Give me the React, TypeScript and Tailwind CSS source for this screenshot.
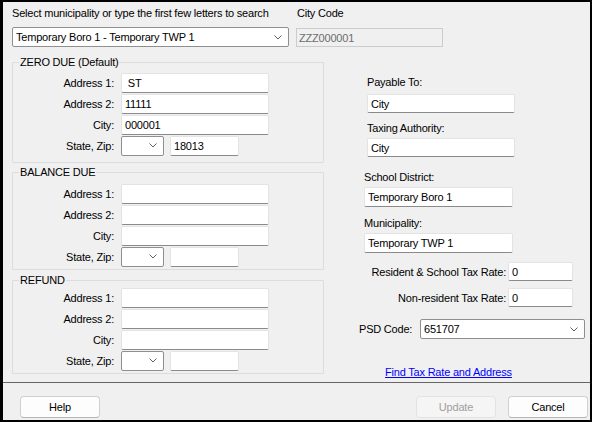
import type { ReactNode } from "react";

function Chevron() {
  return (
    <svg width="8" height="5" viewBox="0 0 8 5" className="shrink-0">
      <path d="M0.5 0.5 L4 4 L7.5 0.5" stroke="#606060" strokeWidth="1" fill="none" />
    </svg>
  );
}

function TextBox({
  value = "",
  className = "",
  short = false,
}: {
  value?: string;
  className?: string;
  short?: boolean;
}) {
  return (
    <input
      readOnly
      defaultValue={value}
      className={`box-border ${short ? "h-[19px]" : "h-[20px]"} rounded-[2px] border border-[#e3e3e3] border-b-[#8a8a8a] bg-white px-[3px] outline-none ${className}`}
    />
  );
}

function Combo({ value = "", className = "" }: { value?: string; className?: string }) {
  return (
    <div
      className={`box-border flex h-[20px] items-center justify-between rounded-[2px] border border-[#8f8f8f] bg-white pl-[3px] pr-[6px] ${className}`}
    >
      <span>{value}</span>
      <Chevron />
    </div>
  );
}

function AddressRow({ label, children }: { label: string; children: ReactNode }) {
  return (
    <div className="flex h-[21px] items-center">
      <span className="w-[101px] text-right">{label}</span>
      <div className="ml-[7px] flex items-center">{children}</div>
    </div>
  );
}

interface GroupProps {
  title: string;
  address1?: string;
  address2?: string;
  city?: string;
  zip?: string;
  className: string;
}

function AddressGroup({ title, address1, address2, city, zip, className }: GroupProps) {
  return (
    <fieldset className={`w-[312px] rounded-[1px] border border-[#dcdcdc] px-0 ${className}`}>
      <legend className="ml-[6px] px-[1px] leading-[14px]">{title}</legend>
      <AddressRow label="Address 1:">
        <TextBox value={address1} className="w-[148px]" />
      </AddressRow>
      <AddressRow label="Address 2:">
        <TextBox value={address2} className="w-[148px]" />
      </AddressRow>
      <AddressRow label="City:">
        <TextBox value={city} className="w-[148px]" />
      </AddressRow>
      <AddressRow label="State, Zip:">
        <Combo className="w-[43px]" />
        <TextBox value={zip} className="ml-[6px] w-[69px]" />
      </AddressRow>
    </fieldset>
  );
}

function Button({ label, disabled = false }: { label: string; disabled?: boolean }) {
  return (
    <button
      className={
        disabled
          ? "box-border h-[22px] w-[80px] rounded-[4px] border border-[#e2e2e2] bg-[#f5f5f5] text-[#a0a0a0]"
          : "box-border h-[22px] w-[80px] rounded-[4px] border border-[#d0d0d0] border-b-[#b5b5b5] bg-[#fdfdfd] text-black"
      }
    >
      {label}
    </button>
  );
}

export default function App() {
  return (
    <div className="box-border flex h-[422px] w-[592px] flex-col border-t-2 border-r-2 border-b-2 border-l-[3px] border-black bg-[#f0f0f0] font-['Liberation_Sans',Arial,sans-serif] text-[11px] leading-[14px] tracking-[-0.2px] text-black">
      <div className="flex flex-1 flex-col pl-[9px] pt-[4px]">
        <div className="flex gap-[7px]">
          <div className="flex w-[277px] flex-col gap-[7px]">
            <span>Select municipality or type the first few letters to search</span>
            <Combo value="Temporary Boro 1 - Temporary TWP 1" className="w-[277px]" />
          </div>
          <div className="flex w-[147px] flex-col">
            <span className="pl-[1px]">City Code</span>
            <div className="mt-[8px] box-border flex h-[19px] items-center border border-[#cccccc] bg-[#f0f0f0] pl-[2px] text-[#6d6d6d]">
              ZZZ000001
            </div>
          </div>
        </div>

        <div className="mt-[8px] flex">
          <div className="flex flex-col">
            <AddressGroup
              title="ZERO DUE (Default)"
              address1=" ST"
              address2="11111"
              city="000001"
              zip="18013"
              className="pt-[3px] pb-[6px]"
            />
            <AddressGroup title="BALANCE DUE" className="mt-[2px] pt-[4px] pb-[2px]" />
            <AddressGroup title="REFUND" className="mt-[3px] pt-0 pb-[2px]" />
          </div>

          <div className="ml-[35px] flex w-[226px] flex-col pt-[20px]">
            <span className="ml-[8px]">Payable To:</span>
            <TextBox value="City" short className="mt-[5px] ml-[8px] w-[148px]" />
            <span className="mt-[8px] ml-[8px]">Taxing Authority:</span>
            <TextBox value="City" short className="mt-[3px] ml-[8px] w-[148px]" />
            <span className="mt-[13px] ml-[5px]">School District:</span>
            <TextBox value="Temporary Boro 1" className="mt-[3px] ml-[5px] w-[149px]" />
            <span className="mt-[9px] ml-[5px]">Municipality:</span>
            <TextBox value="Temporary TWP 1" className="mt-[3px] ml-[5px] w-[149px]" />
            <div className="mt-[9px] flex items-center justify-end gap-[2px] pr-[12px]">
              <span>Resident &amp; School Tax Rate:</span>
              <TextBox value="0" short className="w-[65px]" />
            </div>
            <div className="mt-[7px] flex items-center justify-end gap-[2px] pr-[12px]">
              <span>Non-resident Tax Rate:</span>
              <TextBox value="0" short className="w-[65px]" />
            </div>
            <div className="mt-[12px] flex items-center">
              <span className="w-[61px]">PSD Code:</span>
              <Combo value="651707" className="w-[165px]" />
            </div>
            <a className="mt-[26px] ml-[26px] text-[#0000ff] underline" href="#">
              Find Tax Rate and Address
            </a>
          </div>
        </div>
      </div>

      <div className="h-px bg-[#666666]" />

      <div className="flex h-[37px] items-start pl-[17px] pr-[2px] pt-[13px]">
        <Button label="Help" />
        <div className="ml-auto flex gap-[12px]">
          <Button label="Update" disabled />
          <Button label="Cancel" />
        </div>
      </div>
    </div>
  );
}
